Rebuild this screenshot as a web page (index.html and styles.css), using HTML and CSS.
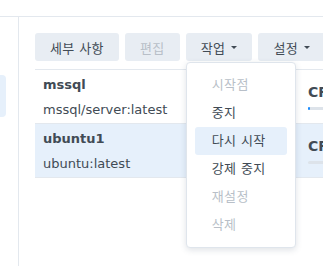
FILE: index.html
```html
<!DOCTYPE html>
<html lang="ko">
<head>
    <meta charset="UTF-8">
    <title>Container</title>
    <link rel="stylesheet" href="styles.css">
</head>
<body>
    <div class="topbar"></div>
    <div class="main">
        <div class="sidebar">
            <div class="nav-item active"></div>
        </div>
        <div class="content">
            <div class="toolbar">
                <button class="btn">세부 사항</button>
                <button class="btn disabled">편집</button>
                <div class="btn-wrap">
                    <button class="btn">작업<span class="caret"></span></button>
                    <ul class="menu">
                        <li class="disabled">시작점</li>
                        <li>중지</li>
                        <li class="hover">다시 시작</li>
                        <li>강제 중지</li>
                        <li class="disabled">재설정</li>
                        <li class="disabled">삭제</li>
                    </ul>
                </div>
                <button class="btn">설정<span class="caret"></span></button>
            </div>
            <div class="grid">
                <div class="row">
                    <div class="cell-name">
                        <div class="name">mssql</div>
                        <div class="image">mssql/server:latest</div>
                    </div>
                    <div class="cell-cpu">
                        <div class="cpu">CPU</div>
                        <div class="bar"><div class="fill" style="width: 2px"></div></div>
                    </div>
                </div>
                <div class="row selected">
                    <div class="cell-name">
                        <div class="name">ubuntu1</div>
                        <div class="image">ubuntu:latest</div>
                    </div>
                    <div class="cell-cpu">
                        <div class="cpu">CPU</div>
                        <div class="bar"><div class="fill" style="width: 0px"></div></div>
                    </div>
                </div>
            </div>
        </div>
    </div>
</body>
</html>
```

FILE: styles.css
```css
body {
    margin: 0;
    font-family: "DejaVu Sans", "Noto Sans CJK KR", sans-serif;
    font-size: 13px;
    color: #414b55;
    background: #fff;
    overflow: hidden;
}
.topbar {
    height: 16px;
    border-bottom: 1px solid #e3e8ee;
}
.main {
    display: flex;
    height: 249px;
}
.sidebar {
    width: 18px;
    flex-shrink: 0;
    border-right: 1px solid #e3e8ee;
}
.nav-item {
    height: 42px;
    width: 6px;
    margin-top: 58px;
    border-radius: 0 4px 4px 0;
}
.nav-item.active {
    background: #e6f0fb;
}
.content {
    flex: 1;
    padding: 16px 0 0 16px;
    min-width: 0;
}
.toolbar {
    display: flex;
    gap: 6px;
    white-space: nowrap;
}
.btn {
    height: 28px;
    padding: 0 15px;
    border: none;
    border-radius: 3px;
    background: #e8edf3;
    color: #414b55;
    font-family: "DejaVu Sans", "Noto Sans CJK KR", sans-serif;
    font-size: 13px;
    letter-spacing: 0.4px;
    display: flex;
    align-items: center;
    flex-shrink: 0;
}
.btn.disabled {
    color: #b8bfc8;
}
.caret {
    display: inline-block;
    margin-left: 6px;
    border-left: 3.5px solid transparent;
    border-right: 3.5px solid transparent;
    border-top: 3.5px solid #414b55;
}
.btn-wrap {
    position: relative;
}
.menu {
    position: absolute;
    top: 29px;
    left: 0;
    z-index: 2;
    width: 108px;
    margin: 0;
    padding: 8px 0;
    list-style: none;
    background: #fff;
    border: 1px solid #dfe5ec;
    border-radius: 4px;
    box-shadow: 0 2px 6px rgba(40, 60, 90, 0.15);
    letter-spacing: 0.4px;
}
.menu li {
    height: 28px;
    line-height: 28px;
    margin: 0 8px;
    padding-left: 17px;
    border-radius: 3px;
}
.menu li.disabled {
    color: #b8bfc8;
}
.menu li.hover {
    background: #e6f0fb;
}
.grid {
    margin-top: 8px;
    border-top: 1px solid #e3e8ee;
}
.row {
    display: flex;
    height: 53px;
    border-bottom: 1px solid #e3e8ee;
}
.row.selected {
    background: #e6f0fb;
}
.cell-name {
    width: 273px;
    flex-shrink: 0;
    padding: 3px 8px 0;
    box-sizing: border-box;
}
.name {
    font-weight: bold;
    height: 24px;
    line-height: 24px;
}
.image {
    height: 24px;
    line-height: 26px;
}
.cell-cpu {
    padding-top: 14px;
    min-width: 40px;
}
.cpu {
    font-weight: bold;
    font-size: 14px;
    line-height: 16px;
}
.bar {
    margin-top: 7px;
    height: 3px;
    width: 60px;
    background: #dde3ea;
    border-radius: 2px;
}
.fill {
    height: 3px;
    background: #1a8cff;
    border-radius: 2px;
}
```
